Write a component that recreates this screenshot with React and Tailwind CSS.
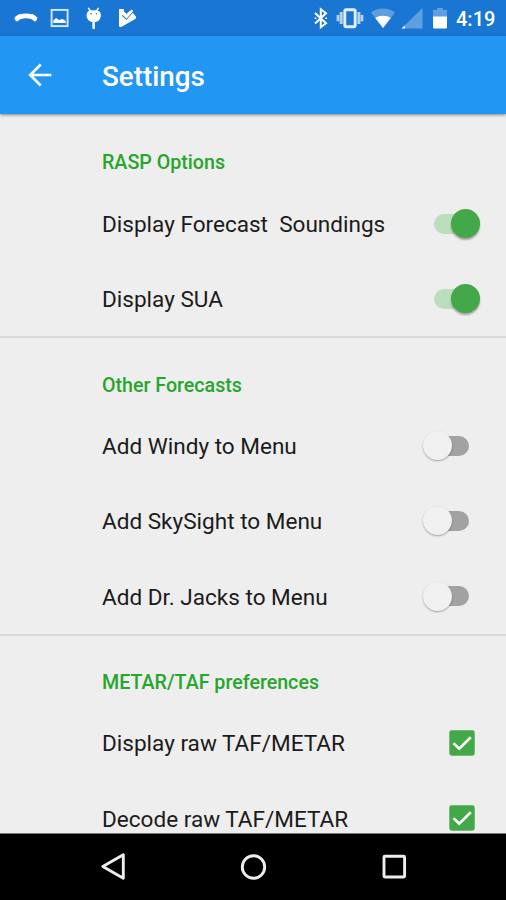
import React from "react";

function StatusBar() {
  return (
    <div className="flex h-9 shrink-0 items-start bg-[#1976d2] text-white">
      <svg className="h-9 w-[140px]" viewBox="0 0 140 36" fill="none">
        <path d="M16 19.4C21 14.8 31 14.8 36 19.4" stroke="white" strokeWidth="4.8" />
        <path d="M14.6 18.8C14.6 17.6 18 14.6 20 13.8V18.6L17.4 21.4C16 21.4 14.8 20.2 14.6 18.8ZM37.2 18.8C37.2 17.6 34 14.6 32 13.8V18.6L34.6 21.4C36 21.4 37 20.2 37.2 18.8Z" fill="white" />
        <rect x="51.6" y="9.9" width="16" height="16.2" stroke="#d8e8f8" strokeWidth="1.9" />
        <path d="M53.3 23V20.4L56 18L59 20L62.6 19L65.8 21V23Z" fill="white" />
        <path d="M88.6 8.3L90.6 11.4M98.2 8.3L96.3 11.4" stroke="white" strokeWidth="1.5" strokeLinecap="round" />
        <path d="M87.4 12.2C89 9.6 98.6 9.6 100.1 12.2C102.2 15.8 100 20.4 97.2 21.6C95.3 22.6 92.3 22.6 90.4 21.6C87.5 20.4 85.3 15.8 87.4 12.2Z" fill="white" />
        <path d="M93.6 21V28" stroke="white" strokeWidth="2.5" strokeLinecap="round" />
        <circle cx="91" cy="13.7" r=".8" fill="#1976d2" />
        <circle cx="96.4" cy="13.7" r=".8" fill="#1976d2" />
        <path d="M119 9H123.4L126.5 12.6L131 10.4L136 16.8Q136.6 18 135.2 19L121.7 26.7Q119 27.8 119 25.4Z" fill="white" />
        <path d="M122.4 15.2L126.4 19L133.4 11" stroke="#1976d2" strokeWidth="1.5" />
        <path d="M124 10.4L126.6 13L129 10.2" stroke="#1976d2" strokeWidth="1.5" />
        <path d="M122.4 13L126.5 17L132.4 10.2" stroke="white" strokeWidth="2.4" />
      </svg>
      <svg className="ml-auto h-9 w-[150px]" viewBox="306 0 150 36" fill="none">
        <path d="M315 13L326 23.2L320.8 27.2V9.2L326 13.2L315 23.4" stroke="white" strokeWidth="2" />
        <path d="M314.6 18.2H316.4M325.2 18.2H327" stroke="white" strokeWidth="1.6" />
        <rect x="344.8" y="9.7" width="10.4" height="17" rx="1.4" stroke="#e4effa" strokeWidth="2.9" />
        <path d="M341.2 12V24M358.9 12V24" stroke="#b5d2f0" strokeWidth="3" />
        <path d="M338 15V21.3M362 15V21.3" stroke="#b5d2f0" strokeWidth="2.8" />
        <path d="M371 12.6C377.5 7 388.5 7 395 12.6L383 28Z" fill="#5e9fdf" />
        <path d="M375.2 18C379.5 14.9 386.5 14.9 390.8 18L383 28Z" fill="white" />
        <path d="M422.5 8V28.6H401.5Z" fill="#5e9fdf" />
        <path d="M404.8 25.4V28.6H401.5Z" fill="white" />
        <path d="M437 8H443V10H447V17H433V10H437Z" fill="#5e9fdf" />
        <path d="M433 16.5H447V27Q447 28.5 445.5 28.5H434.5Q433 28.5 433 27Z" fill="white" />
      </svg>
      <span className="mr-[11px] w-[39px] whitespace-nowrap pt-px text-[20px] leading-[37px] font-medium">4:19</span>
    </div>
  );
}

function AppBar() {
  return (
    <header className="relative z-10 flex h-[78px] shrink-0 items-center bg-[#2196f3] text-white shadow-[0_1px_3px_rgba(0,0,0,0.45)]">
      <svg className="ml-[28px] h-6 w-6" viewBox="0 0 24 24" fill="none" stroke="white" strokeWidth="2.6">
        <path d="M23.3 12H2.5M12.7 1.5L2.2 12L12.7 22.5" />
      </svg>
      <h1 className="ml-[50px] pt-[3px] text-[27.8px] leading-8 font-medium">Settings</h1>
    </header>
  );
}

function Toggle({ on }) {
  return on ? (
    <span className="mr-[26px] flex h-5 w-[46px] items-center">
      <span className="h-5 w-5 rounded-l-full bg-[#bbdfbd]" />
      <span className="-ml-[3px] h-[29px] w-[29px] shrink-0 rounded-full bg-[#43a848] shadow-[0_2px_2px_rgba(0,0,0,0.32)]" />
    </span>
  ) : (
    <span className="mr-[37px] flex h-5 w-[46px] items-center">
      <span className="z-10 h-[29px] w-[29px] shrink-0 rounded-full bg-[#f0f0f0] shadow-[0_1px_2px_rgba(0,0,0,0.32)]" />
      <span className="-ml-[6px] h-5 w-[23px] rounded-r-full bg-[#a2a2a2]" />
    </span>
  );
}

function Checkbox() {
  return (
    <svg className="mr-[31px] mb-[0.6px] h-[26px] w-[26px]" viewBox="0 0 26 26" fill="none">
      <rect x=".3" y=".3" width="25.4" height="25.4" rx="2.4" fill="#43a848" />
      <path d="M4.5 13.1L10.2 18.6L21.8 7.2" stroke="white" strokeWidth="2.7" />
    </svg>
  );
}

function Row({ label, children }) {
  return (
    <div className="flex h-[75.2px] shrink-0 items-center justify-between pl-[102px]">
      <span className="whitespace-pre pt-[2.8px] text-[22.55px] leading-7 text-[#1b1b1b]">{label}</span>
      {children}
    </div>
  );
}

function Section({ title, first, children }) {
  return (
    <section className={first ? "shrink-0 pt-[37px]" : "shrink-0 border-t-2 border-[#d9d9d9] pt-[35.4px]"}>
      <h2 className={first ? "h-[35px] pl-[102px] text-[19.65px] leading-6 font-medium text-[#27a52c]" : "h-[34.4px] pl-[102px] text-[19.65px] leading-6 font-medium text-[#27a52c]"}>{title}</h2>
      {children}
    </section>
  );
}

function NavBar() {
  return (
    <nav className="flex h-[67px] shrink-0 items-center justify-center border-t border-[#777] bg-black">
      <svg className="h-[66px] w-[506px]" viewBox="0 834 506 66" fill="none" stroke="#eee" strokeWidth="2.9">
        <path d="M123.3 854.7V878.3L102.8 866.5Z" strokeLinejoin="round" />
        <circle cx="253.5" cy="867" r="11.2" />
        <rect x="384" y="856.2" width="20.6" height="20.8" rx="1" />
      </svg>
    </nav>
  );
}

export default function App() {
  return (
    <div className="flex h-[900px] w-[506px] flex-col overflow-hidden bg-[#eee] font-[Roboto,sans-serif]">
      <StatusBar />
      <AppBar />
      <main className="flex min-h-0 flex-1 flex-col overflow-hidden">
        <Section title="RASP Options" first>
          <Row label="Display Forecast  Soundings"><Toggle on /></Row>
          <Row label="Display SUA"><Toggle on /></Row>
        </Section>
        <Section title="Other Forecasts">
          <Row label="Add Windy to Menu"><Toggle /></Row>
          <Row label="Add SkySight to Menu"><Toggle /></Row>
          <Row label="Add Dr. Jacks to Menu"><Toggle /></Row>
        </Section>
        <Section title="METAR/TAF preferences">
          <Row label="Display raw TAF/METAR"><Checkbox /></Row>
          <Row label="Decode raw TAF/METAR"><Checkbox /></Row>
        </Section>
      </main>
      <NavBar />
    </div>
  );
}
